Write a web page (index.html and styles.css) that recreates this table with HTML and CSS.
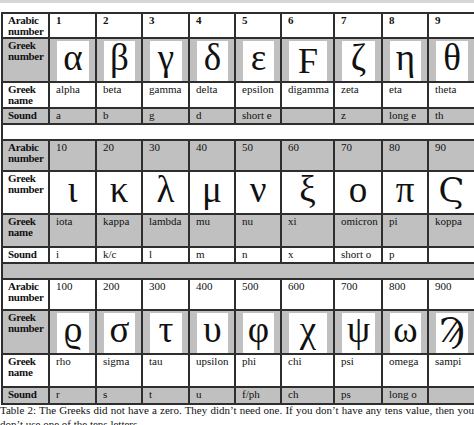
FILE: index.html
```html
<!DOCTYPE html>
<html>
<head>
<meta charset="utf-8">
<link rel="stylesheet" href="styles.css">
</head>
<body>
<div class="topband"></div>
<table class="greek">
  <colgroup>
    <col style="width:47px"><col style="width:47px"><col style="width:46px"><col style="width:47px"><col style="width:46px"><col style="width:46px"><col style="width:53px"><col style="width:48px"><col style="width:46px"><col style="width:47px">
  </colgroup>
  <tr class="w r-arabic1">
    <th>Arabic number</th><td class="b">1</td><td class="b">2</td><td class="b">3</td><td class="b">4</td><td class="b">5</td><td class="b">6</td><td class="b">7</td><td class="b">8</td><td class="b">9</td>
  </tr>
  <tr class="g r-letter">
    <th>Greek number</th>
    <td class="box"><div>α</div></td><td class="box"><div>β</div></td><td class="box"><div>γ</div></td><td class="box"><div>δ</div></td><td class="box"><div>ε</div></td><td class="box"><div class="dg">Ϝ</div></td><td class="box"><div>ζ</div></td><td class="box"><div>η</div></td><td class="box"><div>θ</div></td>
  </tr>
  <tr class="w r-name1">
    <th>Greek name</th><td>alpha</td><td>beta</td><td>gamma</td><td>delta</td><td>epsilon</td><td>digamma</td><td>zeta</td><td>eta</td><td>theta</td>
  </tr>
  <tr class="g r-sound">
    <th>Sound</th><td>a</td><td>b</td><td>g</td><td>d</td><td>short e</td><td></td><td>z</td><td>long e</td><td>th</td>
  </tr>
  <tr class="w r-sep1"><td colspan="10"></td></tr>

  <tr class="g r-arabic">
    <th>Arabic number</th><td>10</td><td>20</td><td>30</td><td>40</td><td>50</td><td>60</td><td>70</td><td>80</td><td>90</td>
  </tr>
  <tr class="w r-letter">
    <th>Greek number</th>
    <td class="let">ι</td><td class="let">κ</td><td class="let">λ</td><td class="let">μ</td><td class="let">ν</td><td class="let">ξ</td><td class="let">ο</td><td class="let">π</td><td class="let dj">Ϛ</td>
  </tr>
  <tr class="g r-name">
    <th>Greek name</th><td>iota</td><td>kappa</td><td>lambda</td><td>mu</td><td>nu</td><td>xi</td><td>omicron</td><td>pi</td><td>koppa</td>
  </tr>
  <tr class="w r-sound">
    <th>Sound</th><td>i</td><td>k/c</td><td>l</td><td>m</td><td>n</td><td>x</td><td>short o</td><td>p</td><td></td>
  </tr>
  <tr class="g r-sep2"><td colspan="10"></td></tr>

  <tr class="w r-arabic">
    <th>Arabic number</th><td>100</td><td>200</td><td>300</td><td>400</td><td>500</td><td>600</td><td>700</td><td>800</td><td>900</td>
  </tr>
  <tr class="g r-letter">
    <th>Greek number</th>
    <td class="box"><div>ϱ</div></td><td class="box"><div>σ</div></td><td class="box"><div>τ</div></td><td class="box"><div>υ</div></td><td class="box"><div>φ</div></td><td class="box"><div>χ</div></td><td class="box"><div>ψ</div></td><td class="box"><div>ω</div></td><td class="box"><div class="dj">Ϡ</div></td>
  </tr>
  <tr class="w r-name">
    <th>Greek name</th><td>rho</td><td>sigma</td><td>tau</td><td>upsilon</td><td>phi</td><td>chi</td><td>psi</td><td>omega</td><td>sampi</td>
  </tr>
  <tr class="g r-sound3">
    <th>Sound</th><td>r</td><td>s</td><td>t</td><td>u</td><td>f/ph</td><td>ch</td><td>ps</td><td>long o</td><td></td>
  </tr>
</table>
<p class="caption">Table 2: The Greeks did not have a zero. They didn’t need one. If you don’t have any tens value, then you don’t use one of the tens letters.</p>
</body>
</html>
```
FILE: styles.css
```css
html, body {
  margin: 0;
  padding: 0;
  background: #fff;
}
body {
  width: 474px;
  height: 425px;
  overflow: hidden;
  font-family: "Liberation Serif", "DejaVu Serif", serif;
  color: #111;
}
.topband {
  height: 3px;
  background: #d6d6d6;
  margin-bottom: 9px;
}
.greek {
  border-collapse: collapse;
  table-layout: fixed;
  width: 473px;
  margin-left: 1px;
}
.greek th,
.greek td {
  border: 2px solid #2e2e2e;
  padding: 1px 5px 0 6px;
  vertical-align: top;
  text-align: left;
  font-size: 11px;
  line-height: 11px;
  white-space: nowrap;
}
.greek th {
  white-space: normal;
  font-weight: bold;
  font-size: 11px;
  letter-spacing: -0.3px;
  padding-left: 5px;
}
.greek td.b {
  font-weight: bold;
}
.g th, .g td { background: #c0c0c0; }
.w th, .w td { background: #fff; }

.r-arabic1 { height: 24px; }
.r-arabic { height: 31px; }
.r-letter { height: 43px; }
.r-name1 { height: 26px; }
.r-name { height: 33px; }
.r-sound { height: 16px; }
.r-sound3 { height: 17px; }
.r-sep1 { height: 16px; }
.r-sep2 { height: 16px; }

.greek td.box {
  padding: 2px 6px 0 7px;
  vertical-align: bottom;
}
.box div {
  background: #fff;
  height: 40px;
  font-family: "Liberation Serif", "DejaVu Serif", serif;
  font-size: 37px;
  line-height: 34px;
  text-align: center;
}
.box div.dg {
  line-height: 40px;
  font-size: 36px;
}
.box div.dj {
  font-family: "DejaVu Serif", serif;
  font-size: 33px;
  line-height: 36px;
}
.greek td.let {
  padding: 0 0 6px 0;
  text-align: center;
  vertical-align: middle;
  font-family: "Liberation Serif", "DejaVu Serif", serif;
  font-size: 37px;
  line-height: 34px;
}
.greek td.let.dj {
  font-family: "DejaVu Serif", serif;
  font-size: 34px;
}
.caption {
  margin: -2px 0 0 0;
  width: 474px;
  font-size: 11px;
  line-height: 14px;
  text-align: justify;
  color: #111;
}
```
